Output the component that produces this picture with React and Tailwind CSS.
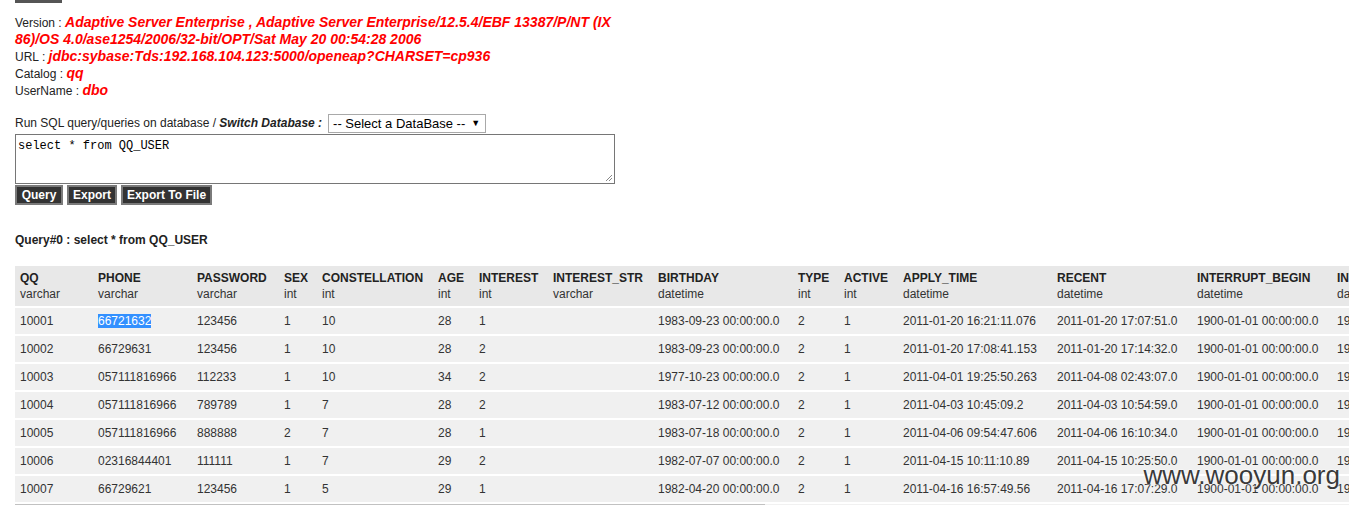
import React from 'react'

const columns = [
  { name: 'QQ', type: 'varchar', w: 'w-[78px]' },
  { name: 'PHONE', type: 'varchar', w: 'w-[99px]' },
  { name: 'PASSWORD', type: 'varchar', w: 'w-[87px]' },
  { name: 'SEX', type: 'int', w: 'w-[38px]' },
  { name: 'CONSTELLATION', type: 'int', w: 'w-[116px]' },
  { name: 'AGE', type: 'int', w: 'w-[41px]' },
  { name: 'INTEREST', type: 'int', w: 'w-[74px]' },
  { name: 'INTEREST_STR', type: 'varchar', w: 'w-[105px]' },
  { name: 'BIRTHDAY', type: 'datetime', w: 'w-[140px]' },
  { name: 'TYPE', type: 'int', w: 'w-[46px]' },
  { name: 'ACTIVE', type: 'int', w: 'w-[59px]' },
  { name: 'APPLY_TIME', type: 'datetime', w: 'w-[154px]' },
  { name: 'RECENT', type: 'datetime', w: 'w-[140px]' },
  { name: 'INTERRUPT_BEGIN', type: 'datetime', w: 'w-[140px]' },
  { name: 'INTERRUPT_END', type: 'datetime', w: 'w-[140px]' },
]

const rows = [
  ['10001', '66721632', '123456', '1', '10', '28', '1', '', '1983-09-23 00:00:00.0', '2', '1', '2011-01-20 16:21:11.076', '2011-01-20 17:07:51.0', '1900-01-01 00:00:00.0', '1900-01-01 00:00:00.0'],
  ['10002', '66729631', '123456', '1', '10', '28', '2', '', '1983-09-23 00:00:00.0', '2', '1', '2011-01-20 17:08:41.153', '2011-01-20 17:14:32.0', '1900-01-01 00:00:00.0', '1900-01-01 00:00:00.0'],
  ['10003', '057111816966', '112233', '1', '10', '34', '2', '', '1977-10-23 00:00:00.0', '2', '1', '2011-04-01 19:25:50.263', '2011-04-08 02:43:07.0', '1900-01-01 00:00:00.0', '1900-01-01 00:00:00.0'],
  ['10004', '057111816966', '789789', '1', '7', '28', '2', '', '1983-07-12 00:00:00.0', '2', '1', '2011-04-03 10:45:09.2', '2011-04-03 10:54:59.0', '1900-01-01 00:00:00.0', '1900-01-01 00:00:00.0'],
  ['10005', '057111816966', '888888', '2', '7', '28', '1', '', '1983-07-18 00:00:00.0', '2', '1', '2011-04-06 09:54:47.606', '2011-04-06 16:10:34.0', '1900-01-01 00:00:00.0', '1900-01-01 00:00:00.0'],
  ['10006', '02316844401', '111111', '1', '7', '29', '2', '', '1982-07-07 00:00:00.0', '2', '1', '2011-04-15 10:11:10.89', '2011-04-15 10:25:50.0', '1900-01-01 00:00:00.0', '1900-01-01 00:00:00.0'],
  ['10007', '66729621', '123456', '1', '5', '29', '1', '', '1982-04-20 00:00:00.0', '2', '1', '2011-04-16 16:57:49.56', '2011-04-16 17:07:29.0', '1900-01-01 00:00:00.0', '1900-01-01 00:00:00.0'],
]

function Info({ label, children }) {
  return (
    <div>
      {label} : <span className="text-[14px] leading-none font-bold italic text-[#f00]">{children}</span>
    </div>
  )
}

function Btn({ children, w }) {
  return (
    <button
      type="button"
      className={`${w} h-[20px] border-2 border-[#7a7a7a] bg-[#333] text-[12px] font-bold leading-none text-white`}
    >
      {children}
    </button>
  )
}

export default function App() {
  return (
    <div className="relative h-[505px] overflow-hidden bg-white font-['Liberation_Sans',Arial,sans-serif] text-[12px] leading-[17px] text-[#222]">
      <div className="ml-[15px] h-[3px] w-[47px] bg-[#555]" />

      <div className="ml-[15px] mt-[12px] w-[630px]">
        <Info label="Version">
          Adaptive Server Enterprise , Adaptive Server Enterprise/12.5.4/EBF 13387/P/NT (IX 86)/OS 4.0/ase1254/2006/32-bit/OPT/Sat May 20 00:54:28 2006
        </Info>
        <Info label="URL">jdbc:sybase:Tds:192.168.104.123:5000/openeap?CHARSET=cp936</Info>
        <Info label="Catalog">qq</Info>
        <Info label="UserName">dbo</Info>
      </div>

      <div className="ml-[15px] mt-[14px] flex items-center">
        <span>
          Run SQL query/queries on database / <b className="italic">Switch Database :</b>
        </span>
        <div className="ml-[6px] flex h-[19px] w-[158px] items-center border border-[#a9a9a9] bg-white pl-[4px] text-[13px] text-black">
          <span>-- Select a DataBase --</span>
          <span className="ml-[6px] text-[9px]">▼</span>
        </div>
      </div>

      <div className="relative ml-[15px] mt-[1px] h-[50px] w-[600px] border border-[#767676] px-[2px] pt-[4px] font-['Liberation_Mono','Courier_New',monospace] text-[12px] leading-[14px] text-black">
        select * from QQ_USER
        <svg className="absolute bottom-[1px] right-[1px]" width="8" height="8" viewBox="0 0 8 8">
          <path d="M7 1 L1 7 M7 4 L4 7" stroke="#888" strokeWidth="1" />
        </svg>
      </div>

      <div className="ml-[15px] mt-[1px] flex gap-[4px]">
        <Btn w="w-[48px]">Query</Btn>
        <Btn w="w-[50px]">Export</Btn>
        <Btn w="w-[91px]">Export To File</Btn>
      </div>

      <div className="ml-[15px] mt-[27px] font-bold">Query#0 : select * from QQ_USER</div>

      <div className="ml-[15px] mt-[17px] overflow-hidden">
        <table className="w-[1457px] table-fixed border-collapse text-left text-[12px] leading-[16px] text-[#333]">
          <thead>
            <tr className="bg-[#e8e8e8]">
              {columns.map((c) => (
                <th key={c.name} className={`${c.w} border-b-2 border-white px-[5px] py-[4px] align-top font-normal`}>
                  <div className="whitespace-nowrap font-bold text-[#222]">{c.name}</div>
                  <div className="whitespace-nowrap">{c.type}</div>
                </th>
              ))}
            </tr>
          </thead>
          <tbody>
            {rows.map((r, i) => (
              <tr key={i} className="bg-[#f0f0f0]">
                {r.map((v, j) => (
                  <td key={j} className="h-[28px] whitespace-nowrap border-b-2 border-white px-[5px] py-0">
                    {i === 0 && j === 1 ? <span className="bg-[#3390ff] text-white">{v}</span> : v}
                  </td>
                ))}
              </tr>
            ))}
          </tbody>
        </table>
        <div className="h-[8px] bg-[#f1f1f1]">
          <div className="h-full w-[750px] bg-[#c1c1c1]" />
        </div>
      </div>

      <div className="absolute right-[9px] top-[459px] text-[26px] leading-[32px] text-[#3a3a3a] [text-shadow:0_0_2px_#fff,0_0_2px_#fff]">
        www.wooyun.org
      </div>
    </div>
  )
}
